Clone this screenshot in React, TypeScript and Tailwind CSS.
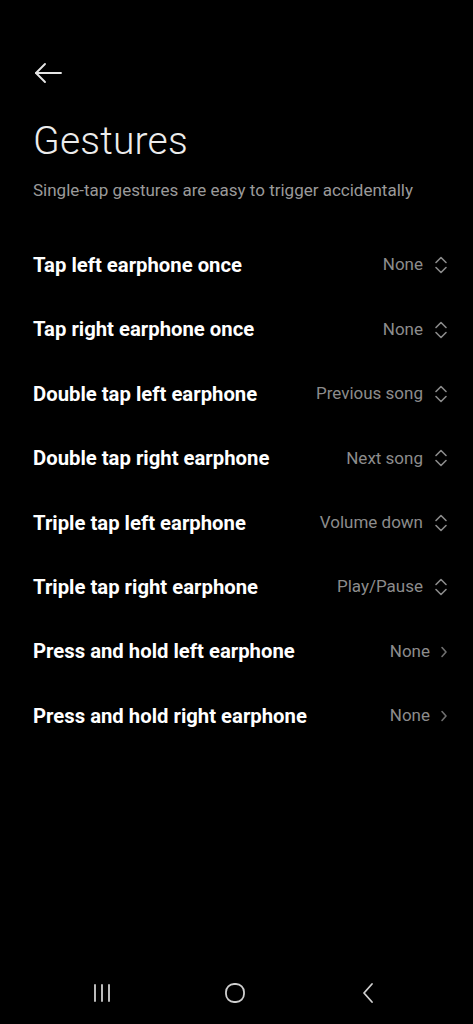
import type { ReactNode } from "react";

const rows: { label: string; value: string; kind: "select" | "link" }[] = [
  { label: "Tap left earphone once", value: "None", kind: "select" },
  { label: "Tap right earphone once", value: "None", kind: "select" },
  { label: "Double tap left earphone", value: "Previous song", kind: "select" },
  { label: "Double tap right earphone", value: "Next song", kind: "select" },
  { label: "Triple tap left earphone", value: "Volume down", kind: "select" },
  { label: "Triple tap right earphone", value: "Play/Pause", kind: "select" },
  { label: "Press and hold left earphone", value: "None", kind: "link" },
  { label: "Press and hold right earphone", value: "None", kind: "link" },
];

function UpDown() {
  return (
    <svg width="14" height="20" viewBox="0 0 14 20" fill="none" stroke="#8a8a8a" strokeWidth="1.6" strokeLinecap="round" strokeLinejoin="round">
      <path d="M2 7.5 7 2.5 12 7.5" />
      <path d="M2 12.5 7 17.5 12 12.5" />
    </svg>
  );
}

function Chevron() {
  return (
    <svg width="8" height="16" viewBox="0 0 8 16" fill="none" stroke="#6f6f6f" strokeWidth="1.6" strokeLinecap="round" strokeLinejoin="round">
      <path d="M2 3.5 6 8 2 12.5" />
    </svg>
  );
}

function Row({ label, value, icon, link }: { label: string; value: string; icon: ReactNode; link: boolean }) {
  return (
    <div className="flex items-center justify-between h-[64.4px]">
      <span className="text-[20.3px] font-bold text-white">{label}</span>
      <div className={link ? "flex items-center gap-[10px]" : "flex items-center gap-[11px]"}>
        <span className="text-[17px] text-[#8c8c8c]">{value}</span>
        <span className="flex justify-center">{icon}</span>
      </div>
    </div>
  );
}

export default function App() {
  return (
    <div className="w-[473px] h-[1024px] bg-black flex flex-col font-['Roboto',sans-serif] overflow-hidden">
      <div className="flex-1 pl-[33px] pr-[25px]">
        <div className="pt-[60px] h-[119px]">
          <svg width="30" height="26" viewBox="0 0 30 26" fill="none" stroke="#e6e6e6" strokeWidth="1.9" strokeLinecap="round" strokeLinejoin="round" className="-ml-[1px]">
            <path d="M4 13H29" />
            <path d="M13 4 4 13 13 22" />
          </svg>
        </div>
        <h1 className="text-[39px] font-light text-[#ececec] leading-[44px] tracking-[0.2px]">Gestures</h1>
        <p className="mt-[16px] text-[17px] text-[#9a9a9a] leading-[22px]">
          Single-tap gestures are easy to trigger accidentally
        </p>
        <div className="mt-[32px]">
          {rows.map((r) => (
            <Row
              key={r.label}
              label={r.label}
              value={r.value}
              link={r.kind === "link"}
              icon={r.kind === "select" ? <UpDown /> : <Chevron />}
            />
          ))}
        </div>
      </div>
      <div className="h-[62px] flex items-center pl-[35px]">
        <div className="w-[133px] flex justify-center">
          <svg width="24" height="20" viewBox="0 0 24 20" fill="none" stroke="#cfcfcf" strokeWidth="1.8" strokeLinecap="round">
            <path d="M5 2V18M12 2V18M19 2V18" />
          </svg>
        </div>
        <div className="w-[133px] flex justify-center">
          <svg width="24" height="24" viewBox="0 0 24 24" fill="none" stroke="#cfcfcf" strokeWidth="1.8">
            <rect x="3" y="3" width="18" height="18" rx="8" />
          </svg>
        </div>
        <div className="w-[133px] flex justify-center">
          <svg width="20" height="24" viewBox="0 0 20 24" fill="none" stroke="#cfcfcf" strokeWidth="1.8" strokeLinecap="round" strokeLinejoin="round">
            <path d="M14 3 6 12 14 21" />
          </svg>
        </div>
      </div>
    </div>
  );
}
